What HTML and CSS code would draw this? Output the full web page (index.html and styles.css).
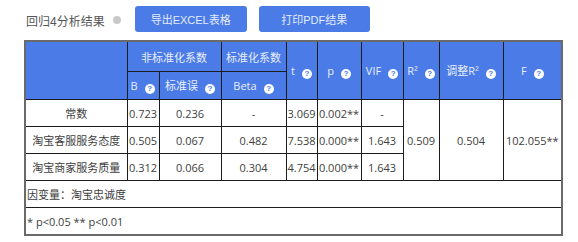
FILE: index.html
```html
<!DOCTYPE html>
<html lang="zh">
<head>
<meta charset="utf-8">
<title>回归4分析结果</title>
<link rel="stylesheet" href="styles.css">
</head>
<body>
<div class="page">
  <div class="toolbar">
    <span class="title">回归4分析结果</span>
    <span class="dot"></span>
    <button class="btn btn-excel">导出EXCEL表格</button>
    <button class="btn btn-pdf">打印PDF结果</button>
  </div>
  <table class="result">
    <colgroup>
      <col class="c-name"><col class="c-b"><col class="c-se"><col class="c-beta"><col class="c-t"><col class="c-p"><col class="c-vif"><col class="c-r2"><col class="c-ar2"><col class="c-f">
    </colgroup>
    <thead>
      <tr class="h1">
        <th rowspan="2"></th>
        <th colspan="2">非标准化系数</th>
        <th>标准化系数</th>
        <th rowspan="2">t<i class="q">?</i></th>
        <th rowspan="2">p<i class="q">?</i></th>
        <th rowspan="2">VIF<i class="q">?</i></th>
        <th rowspan="2">R²<i class="q">?</i></th>
        <th rowspan="2">调整R²<i class="q">?</i></th>
        <th rowspan="2">F<i class="q">?</i></th>
      </tr>
      <tr class="h2">
        <th class="left">B<i class="q">?</i></th>
        <th>标准误<i class="q">?</i></th>
        <th>Beta<i class="q">?</i></th>
      </tr>
    </thead>
    <tbody>
      <tr>
        <td>常数</td><td>0.723</td><td>0.236</td><td>-</td><td>3.069</td><td>0.002**</td><td>-</td>
        <td rowspan="3">0.509</td><td rowspan="3">0.504</td><td rowspan="3">102.055**</td>
      </tr>
      <tr>
        <td>淘宝客服服务态度</td><td>0.505</td><td>0.067</td><td>0.482</td><td>7.538</td><td>0.000**</td><td>1.643</td>
      </tr>
      <tr>
        <td>淘宝商家服务质量</td><td>0.312</td><td>0.066</td><td>0.304</td><td>4.754</td><td>0.000**</td><td>1.643</td>
      </tr>
      <tr class="note">
        <td colspan="10">因变量：淘宝忠诚度</td>
      </tr>
      <tr class="note">
        <td colspan="10">* p&lt;0.05 ** p&lt;0.01</td>
      </tr>
    </tbody>
  </table>
</div>
</body>
</html>
```
FILE: styles.css
```css
html, body {
  margin: 0;
  padding: 0;
  background: #fff;
}
.page {
  padding: 6px 0 0 24px;
  font-family: "Open Sans", "Noto Sans CJK SC", sans-serif;
}
.toolbar {
  display: flex;
  align-items: center;
  height: 26px;
  padding-left: 2px;
}
.title {
  font-family: "Liberation Sans", "Noto Sans CJK SC", sans-serif;
  font-size: 12px;
  color: #555;
  margin-top: 2px;
}
.dot {
  width: 8px;
  height: 8px;
  border-radius: 50%;
  background: #c9c9c9;
  margin-left: 8px;
  margin-top: 1px;
}
.btn {
  height: 26px;
  border: none;
  border-radius: 3px;
  background: #4a7be6;
  color: #e4ebfc;
  font-family: "Liberation Sans", "Noto Sans CJK SC", sans-serif;
  font-size: 11px;
  padding: 0;
  margin: 0;
}
.btn-excel {
  width: 112px;
  margin-left: 14px;
}
.btn-pdf {
  width: 111px;
  margin-left: 12px;
}
.result {
  margin-top: 8px;
  border-collapse: collapse;
  table-layout: fixed;
  width: 539px;
  border: 2px solid #6a6a6a;
  font-size: 11px;
  color: #404040;
}
.c-name { width: 102px; }
.c-b { width: 32px; }
.c-se { width: 62px; }
.c-beta { width: 65px; }
.c-t { width: 31px; }
.c-p { width: 44px; }
.c-vif { width: 42px; }
.c-r2 { width: 36px; }
.c-ar2 { width: 64px; }
.c-f { width: 59px; }
.result th,
.result td {
  border: 1px solid #1c1c1c;
  padding: 0 1px;
  text-align: center;
  white-space: nowrap;
  overflow: hidden;
}
.result th {
  background: #4a7be6;
  color: #e8eefc;
  font-weight: normal;
  height: 27px;
}
.result tr.h1 th {
  height: 29px;
}
.result th.left {
  text-align: left;
  padding-left: 3px;
}
.result td {
  height: 26px;
}
.result tr.note td {
  text-align: left;
  padding-left: 1px;
}
.q {
  display: inline-block;
  width: 10px;
  height: 10px;
  border-radius: 50%;
  background: #fff;
  color: #4a7be6;
  font-family: "Liberation Sans", sans-serif;
  font-style: normal;
  font-weight: bold;
  font-size: 8px;
  line-height: 10px;
  text-align: center;
  margin-left: 7px;
  vertical-align: -1px;
}
```
